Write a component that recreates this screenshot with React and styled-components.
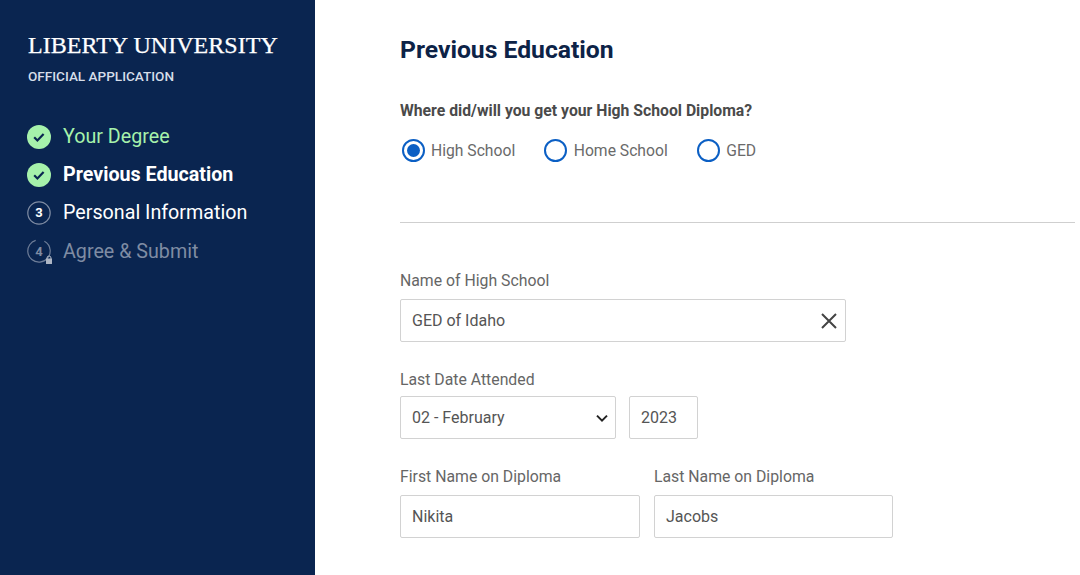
import React from 'react';
import styled, { createGlobalStyle } from 'styled-components';

const GlobalStyle = createGlobalStyle`
    html, body {
        margin: 0;
        padding: 0;
        height: 100%;
        background: #fff;
        font-family: Roboto, 'Liberation Sans', sans-serif;
    }
    #root {
        height: 100%;
    }
`;

const Page = styled.div`
    display: flex;
    width: 1080px;
    height: 575px;
    overflow: hidden;
`;

const Sidebar = styled.aside`
    width: 315px;
    flex: none;
    box-sizing: border-box;
    padding: 30px 0 0 28px;
    background: #0a2550;
    color: #fff;
`;

const Logo = styled.div`
    font-family: 'Liberation Serif', serif;
    font-size: 24px;
    line-height: 30px;
    letter-spacing: 0.05px;
    white-space: nowrap;
    -webkit-text-stroke: 0.25px #fff;
`;

const Subtitle = styled.div`
    margin-top: 8px;
    font-size: 13.55px;
    line-height: 16px;
    font-weight: 500;
    color: #d5dde9;
`;

const Steps = styled.ol`
    list-style: none;
    margin: 40.5px 0 0 -1px;
    padding: 0;
    display: flex;
    flex-direction: column;
    gap: 14.2px;
`;

const Step = styled.li`
    display: flex;
    align-items: center;
    gap: 12px;
    height: 24px;
    font-size: 19.7px;
    font-weight: ${(props) => (props.$bold ? 700 : 400)};
    color: ${(props) => props.$color};
`;

const StepBadge = styled.span`
    position: relative;
    display: flex;
    flex: none;
    align-items: center;
    justify-content: center;
    width: 24px;
    height: 24px;
    font-size: 13px;
    font-weight: 700;
`;

const StepNumber = styled.span`
    position: absolute;
    inset: 0;
    display: flex;
    align-items: center;
    justify-content: center;
    color: ${(props) => props.$color};
`;

const DoneIcon = () => (
    <svg width='24' height='24' viewBox='0 0 24 24'>
        <circle cx='12' cy='12' r='12' fill='#a6f2ab' />
        <path
            d='M7.2 12.3l3.2 3.2 6.2-6.4'
            fill='none'
            stroke='#0a2550'
            strokeWidth='2.2'
        />
    </svg>
);

const RingIcon = ({ locked }) => (
    <svg width='24' height='24' viewBox='0 0 24 24'>
        <circle
            cx='12'
            cy='12'
            r='11.2'
            fill='none'
            stroke={locked ? '#6f7e98' : '#7f8ca3'}
            strokeWidth='1.2'
            strokeDasharray={locked ? '50 9' : undefined}
            transform={locked ? 'rotate(-5 12 12)' : undefined}
        />
        {locked && (
            <g fill='#aeb6c4'>
                <rect x='19' y='19.5' width='6' height='5.5' rx='0.6' />
                <path
                    d='M20 20v-1a2 2 0 0 1 4 0v1'
                    fill='none'
                    stroke='#aeb6c4'
                    strokeWidth='1'
                />
            </g>
        )}
    </svg>
);

const LockedSvgWrap = styled.span`
    display: flex;
    svg {
        overflow: visible;
    }
`;

const Main = styled.main`
    flex: 1;
    box-sizing: border-box;
    padding: 33px 5px 0 85px;
    color: #444;
`;

const Title = styled.h1`
    margin: 0;
    font-size: 24.7px;
    line-height: 34px;
    font-weight: 700;
    color: #0d2347;
`;

const Question = styled.div`
    margin-top: 34px;
    font-size: 15.75px;
    line-height: 20px;
    font-weight: 700;
    color: #4a4a4a;
`;

const RadioRow = styled.div`
    display: flex;
    gap: 27.5px;
    margin-top: 17px;
`;

const RadioOption = styled.label`
    display: flex;
    align-items: center;
    gap: 6.5px;
    height: 24px;
    font-size: 15.7px;
    color: #6a6a6a;
`;

const RadioCircle = styled.span`
    display: flex;
    align-items: center;
    justify-content: center;
    width: 23px;
    height: 23px;
    margin-left: 1.5px;
    box-sizing: border-box;
    border: 2px solid #0b5fc4;
    border-radius: 50%;
    &::after {
        content: '';
        display: ${(props) => (props.$checked ? 'block' : 'none')};
        width: 13px;
        height: 13px;
        border-radius: 50%;
        background: #0b5fc4;
    }
`;

const Divider = styled.hr`
    margin: 60px 0 0;
    border: 0;
    border-top: 1px solid #cfcfcf;
`;

const Field = styled.div`
    display: flex;
    flex-direction: column;
    width: ${(props) => props.$width}px;
`;

const FieldRow = styled.div`
    display: flex;
    align-items: flex-end;
    gap: ${(props) => props.$gap}px;
    margin-top: ${(props) => props.$top}px;
`;

const FieldLabel = styled.div`
    font-size: 15.8px;
    line-height: 20px;
    height: 20px;
    margin-bottom: ${(props) => props.$gap || 8}px;
    color: #666;
`;

const Control = styled.div`
    display: flex;
    align-items: center;
    justify-content: space-between;
    box-sizing: border-box;
    height: 43px;
    padding: 0 6px 0 11px;
    border: 1px solid #d2d2d2;
    border-radius: 2px;
    font-size: 16px;
    color: #555;
    background: #fff;
`;

const ClearIcon = () => (
    <svg width='20' height='20' viewBox='0 0 20 20'>
        <path
            d='M3 3l14 14M17 3L3 17'
            stroke='#444'
            strokeWidth='2'
        />
    </svg>
);

const ChevronIcon = () => (
    <svg width='14' height='10' viewBox='0 0 14 10'>
        <path
            d='M2 2.6l5 5 5-5'
            fill='none'
            stroke='#222'
            strokeWidth='2'
        />
    </svg>
);

const App = () => {
    return (
        <Page>
            <GlobalStyle />
            <Sidebar>
                <Logo>LIBERTY UNIVERSITY</Logo>
                <Subtitle>OFFICIAL APPLICATION</Subtitle>
                <Steps>
                    <Step $color='#a6f2ab'>
                        <StepBadge>
                            <DoneIcon />
                        </StepBadge>
                        Your Degree
                    </Step>
                    <Step $color='#fff' $bold>
                        <StepBadge>
                            <DoneIcon />
                        </StepBadge>
                        Previous Education
                    </Step>
                    <Step $color='#fff'>
                        <StepBadge>
                            <RingIcon />
                            <StepNumber $color='#fff'>3</StepNumber>
                        </StepBadge>
                        Personal Information
                    </Step>
                    <Step $color='#7f8ca3'>
                        <StepBadge>
                            <LockedSvgWrap>
                                <RingIcon locked />
                            </LockedSvgWrap>
                            <StepNumber $color='#7f8ca3'>4</StepNumber>
                        </StepBadge>
                        Agree &amp; Submit
                    </Step>
                </Steps>
            </Sidebar>
            <Main>
                <Title>Previous Education</Title>
                <Question>Where did/will you get your High School Diploma?</Question>
                <RadioRow>
                    <RadioOption>
                        <RadioCircle $checked />
                        High School
                    </RadioOption>
                    <RadioOption>
                        <RadioCircle />
                        Home School
                    </RadioOption>
                    <RadioOption>
                        <RadioCircle />
                        GED
                    </RadioOption>
                </RadioRow>
                <Divider />
                <FieldRow $top={48} $gap={13}>
                    <Field $width={446}>
                        <FieldLabel>Name of High School</FieldLabel>
                        <Control>
                            GED of Idaho
                            <ClearIcon />
                        </Control>
                    </Field>
                </FieldRow>
                <FieldRow $top={28} $gap={13}>
                    <Field $width={216}>
                        <FieldLabel $gap={6}>Last Date Attended</FieldLabel>
                        <Control>
                            02 - February
                            <ChevronIcon />
                        </Control>
                    </Field>
                    <Field $width={69}>
                        <Control>2023</Control>
                    </Field>
                </FieldRow>
                <FieldRow $top={28} $gap={14}>
                    <Field $width={240}>
                        <FieldLabel>First Name on Diploma</FieldLabel>
                        <Control>Nikita</Control>
                    </Field>
                    <Field $width={239}>
                        <FieldLabel>Last Name on Diploma</FieldLabel>
                        <Control>Jacobs</Control>
                    </Field>
                </FieldRow>
            </Main>
        </Page>
    );
};

export default App;
